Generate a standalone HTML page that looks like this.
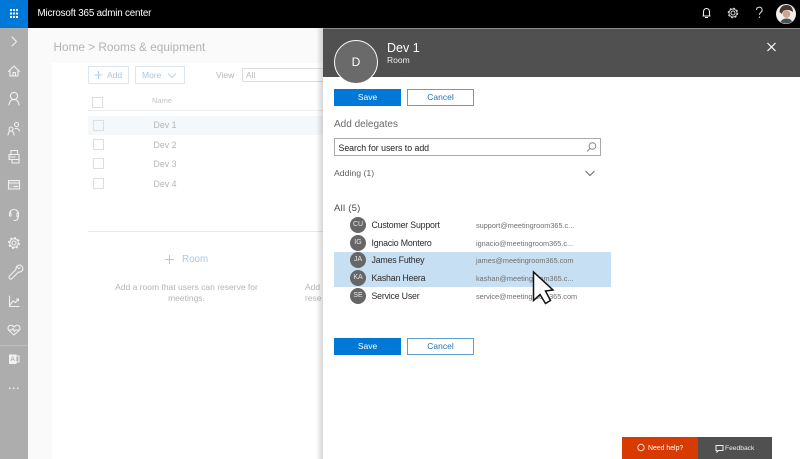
<!DOCTYPE html>
<html lang="en"><head><meta charset="utf-8"><title>Microsoft 365 admin center</title>
<style>
html,body{margin:0;padding:0;width:800px;height:459px;overflow:hidden;background:#fff}
body{font-family:"Liberation Sans",sans-serif;position:relative}
div,span{position:absolute;white-space:nowrap;box-sizing:border-box}
svg{position:absolute;overflow:visible}
.t{line-height:14px;height:14px}
.g{color:#b5b5b5;font-size:8.800px}
.cb{width:11px;height:11px;border:1px solid #dedede;background:#fff}
.pri{background:#0078d7;color:#fff;font-size:8.500px;text-align:center;line-height:17px;height:17px;width:67px;left:334px}
.sec{background:#fff;border:1px solid #5d9fd0;color:#2472b5;font-size:8.500px;text-align:center;line-height:15px;height:17px;width:67px;left:407px}
.av{left:350px;width:16px;height:16px;border-radius:50%;background:#666;color:#e8e8e8;font-size:7px;line-height:16px;text-align:center}
.nm{left:371.500px;font-size:8.800px;letter-spacing:-.2px;color:#2b2b2b;line-height:13px}
.em{left:476px;font-size:7.300px;color:#6f6f6f;line-height:13px}
.ic{fill:none;stroke:#f1f1f1;stroke-width:1.100;stroke-linecap:round;stroke-linejoin:round}
</style></head><body>
<div style="left:28px;top:28px;width:772px;height:431px;background:#fafafa"></div>
<div style="left:52px;top:63px;width:280px;height:396px;background:#fff"></div>

<div style="left:0;top:0;width:800px;height:28px;background:#000"></div>
<div style="left:0;top:0;width:28px;height:28px;background:#0078d7"></div>
<svg style="left:0;top:0" width="28" height="28"><g fill="#fff"><rect x="10" y="9" width="2" height="2"/><rect x="13" y="9" width="2" height="2"/><rect x="16" y="9" width="2" height="2"/><rect x="10" y="12.500" width="2" height="2"/><rect x="13" y="12.500" width="2" height="2"/><rect x="16" y="12.500" width="2" height="2"/><rect x="10" y="16" width="2" height="2"/><rect x="13" y="16" width="2" height="2"/><rect x="16" y="16" width="2" height="2"/></g></svg>
<div class="t" style="left:37.500px;top:7px;color:#fff;font-size:9.800px;letter-spacing:-.17px">Microsoft 365 admin center</div>

<svg style="left:680px;top:0" width="120" height="28">
<path d="M23.500 16V11.500a3 3 0 0 1 6 0V16zM22.500 16h8M25 17.500h3" fill="none" stroke="#eee" stroke-width="1.100"/>
<circle cx="53" cy="13" r="2" fill="none" stroke="#ddd"/><circle cx="53" cy="13" r="4" fill="none" stroke="#ddd" stroke-width=".9"/><circle cx="53" cy="13" r="4.800" fill="none" stroke="#ddd" stroke-width="1" stroke-dasharray="1.900 1.870"/>
<path d="M76.500 10a2.800 2.800 0 1 1 4.200 2.400c-.9.600-1.200 1.200-1.200 2.400" fill="none" stroke="#ddd"/><circle cx="79.500" cy="17.200" r=".7" fill="#ddd"/>
<circle cx="106" cy="14" r="10" fill="#f1efee"/><path d="M99.500 12c.3-5 3.500-7 7-7 4 0 6.500 2.500 6.500 7-2.500-1.500-4.500-2.500-7-2-2 .4-3.500 1-4 4z" fill="#4a372d"/><circle cx="106.500" cy="14" r="3.800" fill="#cfa38c"/><path d="M100.500 22c1.500-2.500 3-3.500 6-3.500s4.500 1 5.500 3a10 10 0 0 1-11.500.5z" fill="#4b5157"/>
</svg>

<div style="left:0;top:28px;width:28px;height:431px;background:#adadad"></div>
<div style="left:0;top:345px;width:28px;height:1px;background:#bcbcbc"></div>
<svg style="left:0;top:0" width="28" height="459" class="ic">
<path d="M12 37l4.500 4.500L12 46"/>
<path d="M8.500 71.500L14 66l5.500 5.500M10 70.500V76h8v-5.500M13 76v-3.500h2.500V76"/>
<circle cx="14" cy="96" r="3.600"/><path d="M9 105c.5-4 2.500-5.500 5-5.500s4.500 1.500 5 5.500"/>
<circle cx="11" cy="129" r="2"/><path d="M8 135c.2-2.500 1.300-4 3-4s2.800 1.500 3 4"/><circle cx="16.500" cy="124.500" r="2"/><path d="M15 128.500c2.500-.5 3.800.5 4.500 2.500"/>
<path d="M11 155v-4.500h6.500v3M9 159.500v-5h10v5zM12 159.500v3.500h7v-3.500M9 157h6"/>
<rect x="8.500" y="180.500" width="11" height="8.500" fill="#f1f1f1" fill-opacity=".18"/><path d="M8.500 183h11M14 186.500h3.500"/>
<path d="M9.500 214a4.500 4.500 0 0 1 9 0v3M9.500 213v3h1.500v-3zM17 213v4h1.500v-4zM18 218c0 1.500-1.500 2.500-4 2.500"/>
<circle cx="14" cy="243" r="2"/><circle cx="14" cy="243" r="4.300"/><circle cx="14" cy="243" r="5.300" stroke-width="1.400" stroke-linecap="butt" stroke-dasharray="2 2.160"/>
<path d="M9 276.500l7-7a3.500 3.500 0 1 1 2.500 2.500l-7 7c-1.500.5-3-1-2.500-2.500zM17 267l1.500 1.500 1.500-.5"/>
<path d="M9.500 296v10.500H19M10 305l3-4 2.500 1.500 3-3.500M16.500 299h2v2"/>
<path d="M14 335l-5-4.500c-2.500-3 .5-6.500 3-5 1 .5 1.500 1 2 1.500.5-.5 1-1 2-1.500 2.500-1.500 5.500 2 3 5zM9 330h3l1 -1.500 1.500 3 1-1.500h3"/>
<rect x="9" y="354.500" width="7.500" height="9.500" fill="#f1f1f1" stroke="none"/><path d="M16.500 356h2.500v6h-2.500"/>
</svg>
<div style="left:10.500px;top:355px;color:#999;font-size:6.500px;line-height:9px">A</div>
<svg style="left:0;top:0" width="28" height="459"><g fill="#eee"><rect x="9" y="387.500" width="1.500" height="1.500"/><rect x="13" y="387.500" width="1.500" height="1.500"/><rect x="17" y="387.500" width="1.500" height="1.500"/></g></svg>

<div class="t" style="left:53.500px;top:40px;color:#b3b3b3;font-size:11.800px">Home &gt; Rooms &amp; equipment</div>
<div style="left:88px;top:66px;width:41px;height:18px;border:1px solid #dce6ee"></div>
<div style="left:135px;top:66px;width:50px;height:18px;border:1px solid #dce6ee"></div>
<svg style="left:0;top:0" width="330" height="300" fill="none"><path d="M98.500 71v8M94.500 75h8" stroke="#b5d0e6"/><path d="M168 73.500l4 4 4-4" stroke="#bcd3e6"/><path d="M169.500 255v9M165 259.500h9" stroke="#a9cbe4"/></svg>
<div class="t" style="left:107px;top:68px;color:#a8c7e0;font-size:8.500px">Add</div>
<div class="t" style="left:142px;top:68px;color:#a8c7e0;font-size:8.500px">More</div>
<div class="t" style="left:216px;top:68px;color:#b5b5b5;font-size:8.500px">View</div>
<div style="left:242px;top:68px;width:90px;height:14px;border:1px solid #ddd;border-radius:1px"></div>
<div class="t" style="left:246px;top:68px;color:#bdbdbd;font-size:8.300px">All</div>
<div class="cb" style="left:92px;top:97px"></div>
<div class="t" style="left:152px;top:94px;color:#c4c4c4;font-size:7.500px">Name</div>
<div style="left:88px;top:110px;width:235px;height:1px;background:#ececec"></div>
<div style="left:88px;top:116px;width:235px;height:19px;background:#f5f8fb"></div>
<div class="cb" style="left:93px;top:120px;background:#f5f8fb"></div>
<div class="cb" style="left:93px;top:139px"></div>
<div class="cb" style="left:93px;top:158px"></div>
<div class="cb" style="left:93px;top:178px"></div>
<div class="t g" style="left:153.500px;top:118px">Dev 1</div>
<div class="t g" style="left:153.500px;top:138px">Dev 2</div>
<div class="t g" style="left:153.500px;top:157px">Dev 3</div>
<div class="t g" style="left:153.500px;top:177px">Dev 4</div>
<div style="left:88px;top:231px;width:235px;height:1px;background:#e9e9e9"></div>
<div class="t" style="left:182px;top:253px;color:#a8c9e2;font-size:9.800px">Room</div>
<div class="t" style="left:88px;width:197px;top:280px;color:#b5b5b5;font-size:8.500px;text-align:center">Add a room that users can reserve for</div>
<div class="t" style="left:88px;width:197px;top:291px;color:#b5b5b5;font-size:8.500px;text-align:center">meetings.</div>
<div class="t" style="left:305px;top:280px;color:#b5b5b5;font-size:8.500px">Add</div>
<div class="t" style="left:305px;top:291px;color:#b5b5b5;font-size:8.500px">rese</div>

<div style="left:316px;top:28px;width:7px;height:431px;background:linear-gradient(to right,rgba(0,0,0,0),rgba(0,0,0,.16))"></div>
<div style="left:323px;top:28px;width:477px;height:431px;background:#fff"></div>
<div style="left:323px;top:28px;width:477px;height:49px;background:#505050;border-top:1px solid #8a8a8a"></div>
<div style="left:334px;top:40px;width:44px;height:44px;border-radius:50%;background:#6a6a6a;border:1px solid #fff;color:#fff;font-size:12px;line-height:43px;text-align:center">D</div>
<div class="t" style="left:387px;top:40.500px;color:#fff;font-size:12.500px">Dev 1</div>
<div class="t" style="left:387px;top:53px;color:#eee;font-size:8.500px">Room</div>
<svg style="left:0;top:0" width="800" height="200" fill="none"><path d="M767.500 43l8 8M775.500 43l-8 8" stroke="#fff" stroke-width="1.200"/><circle cx="592.500" cy="146" r="3.300" stroke="#888"/><path d="M590 148.500l-3 3" stroke="#888"/><path d="M585.500 171l4.500 4.500 4.500-4.500" stroke="#666"/></svg>

<div class="pri" style="top:88.500px">Save</div>
<div class="sec" style="top:88.500px">Cancel</div>
<div class="t" style="left:334px;top:118px;color:#6b6b6b;font-size:10px">Add delegates</div>
<div style="left:334px;top:138px;width:267px;height:18px;border:1px solid #a9a9a9"></div>
<div class="t" style="left:338.500px;top:141px;color:#222;font-size:8.800px;letter-spacing:-.04px">Search for users to add</div>
<div class="t" style="left:334px;top:166px;color:#5f5f5f;font-size:8.700px">Adding (1)</div>
<div class="t" style="left:334px;top:201.500px;color:#4c4c4c;font-size:9.500px;letter-spacing:.25px">All (5)</div>

<div style="left:334px;top:252px;width:277px;height:35px;background:#c7dff3"></div>
<div class="av" style="top:217px">CU</div><div class="nm" style="top:219px">Customer Support</div><div class="em" style="top:219px">support@meetingroom365.c...</div>
<div class="av" style="top:235px">IG</div><div class="nm" style="top:237px">Ignacio Montero</div><div class="em" style="top:237px">ignacio@meetingroom365.c...</div>
<div class="av" style="top:252px">JA</div><div class="nm" style="top:254px">James Futhey</div><div class="em" style="top:254px">james@meetingroom365.com</div>
<div class="av" style="top:270px">KA</div><div class="nm" style="top:272px">Kashan Heera</div><div class="em" style="top:272px">kashan@meetingroom365.c...</div>
<div class="av" style="top:288px">SE</div><div class="nm" style="top:290px">Service User</div><div class="em" style="top:290px">service@meetingroom365.com</div>

<svg style="left:0;top:0" width="800" height="459"><path d="M533.500 272V300.500L540 294.500 545.500 303.500 550.500 300.500 545.500 291 553 290z" fill="#fff" stroke="#111" stroke-width="1.500" stroke-linejoin="miter"/></svg>

<div class="pri" style="top:338px">Save</div>
<div class="sec" style="top:338px">Cancel</div>

<div style="left:622px;top:437px;width:76px;height:22px;background:#d83b01"></div>
<div style="left:698px;top:437px;width:74px;height:22px;background:#505050"></div>
<svg style="left:0;top:0" width="800" height="459" fill="none"><circle cx="641" cy="447.500" r="3.200" stroke="#f3d6c9"/><path d="M716 445.500h7v5h-4.500l-1.500 1.500v-1.500h-1z" stroke="#eee"/></svg>
<div class="t" style="left:648px;top:441px;color:#fff;font-size:6.900px;line-height:15px">Need help?</div>
<div class="t" style="left:725px;top:441px;color:#eee;font-size:6.700px;line-height:15px">Feedback</div>
</body></html>
